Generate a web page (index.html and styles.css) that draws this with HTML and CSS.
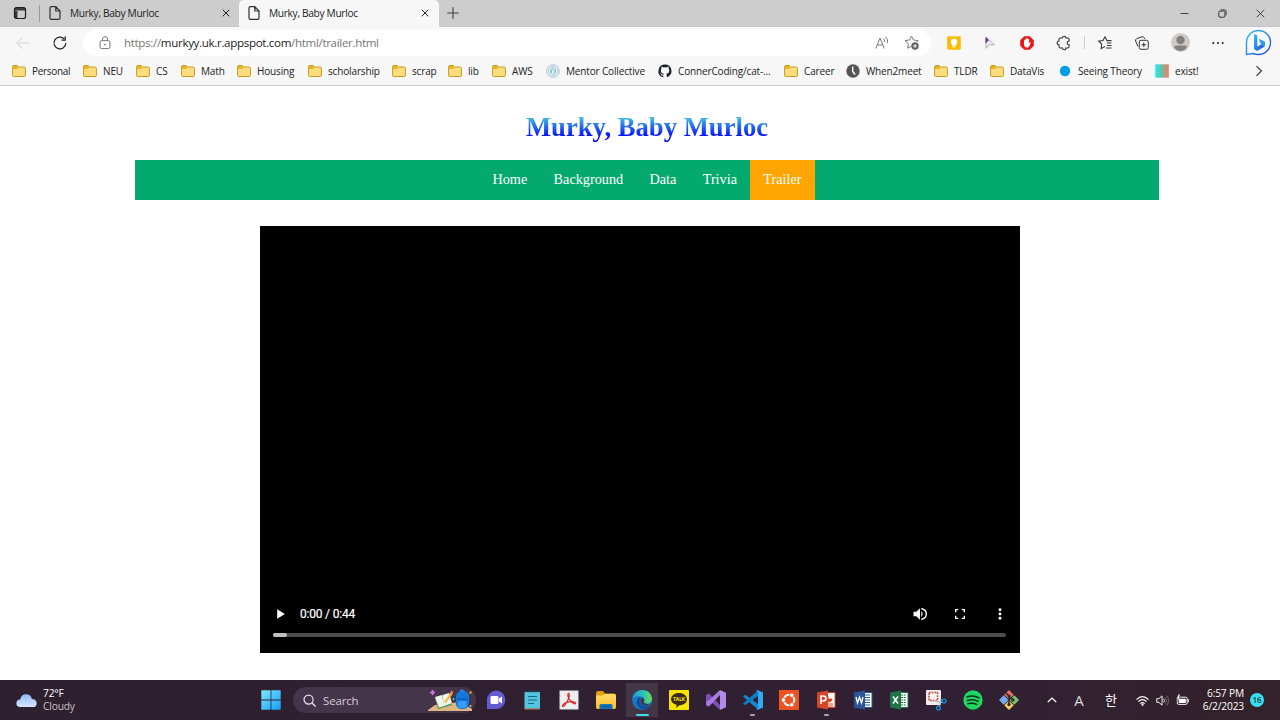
FILE: index.html
```html
<!DOCTYPE html>
<html lang="en">
<head>
<meta charset="utf-8">
<title>Murky, Baby Murloc</title>
<link rel="stylesheet" href="styles.css">
</head>
<body>
<svg class="defs" width="0" height="0">
  <defs>
    <linearGradient id="cyan" x1="0" y1="0" x2="1" y2="1"><stop offset="0" stop-color="#7be8ff"/><stop offset="1" stop-color="#169cf5"/></linearGradient>
    <linearGradient id="bing" x1="0" y1="0" x2="1" y2="1"><stop offset="0" stop-color="#36bdf5"/><stop offset="1" stop-color="#2548d8"/></linearGradient>
    <linearGradient id="cloud" x1="0" y1="0" x2="0" y2="1"><stop offset="0" stop-color="#8db8fa"/><stop offset="1" stop-color="#d8e6ff"/></linearGradient>
    <linearGradient id="edgeA" x1="0" y1="0" x2="1" y2="0"><stop offset="0" stop-color="#1b9de2"/><stop offset=".6" stop-color="#2fc6b0"/><stop offset="1" stop-color="#6add55"/></linearGradient>
    <linearGradient id="yellow" x1="0" y1="0" x2="0" y2="1"><stop offset="0" stop-color="#ffdc6c"/><stop offset="1" stop-color="#f8bd25"/></linearGradient>
    <linearGradient id="rainbow"><stop offset="0" stop-color="#15f4ee"/><stop offset=".5" stop-color="#72b9a5"/><stop offset="1" stop-color="#fb7a54"/></linearGradient>
    <symbol id="folder" viewBox="0 0 14 14"><path d="M.6 3.200v7.900q0 1.400 1.400 1.400h10q1.400 0 1.400-1.400V4.400Q13.400 3 12 3H6.600L5 1.500H2Q.6 1.500.6 3z" fill="#ffdd7e" stroke="#c69a25"/><path d="M1.100 2.200h3.700l1.400 1.300-1.400 1.100H1.100z" fill="#f3b80d" stroke="#c69a25" stroke-width=".5"/></symbol>
    <symbol id="page" viewBox="0 0 12 14"><path d="M1 2Q1 .7 2.300.7h4.500L11 5v7q0 1.300-1.300 1.300H2.300Q1 13.300 1 12zM6.800.7V5H11" fill="none" stroke="#303030" stroke-width="1.200"/></symbol>
    <symbol id="x" viewBox="0 0 8 8"><path d="M.7.7l6.600 6.600M7.300.7L.7 7.300" fill="none" stroke="#222"/></symbol>
  </defs>
</svg>

<header class="browser">
  <div class="tabs">
    <svg class="tab-actions" viewBox="0 0 14 14"><rect x="1.500" y="1.500" width="11" height="11" rx="2" fill="none" stroke="#1e1e1e" stroke-width="1.200"/><path d="M1.500 4.500V3q0-1.500 1.500-1.500h8q1.500 0 1.500 1.500v1.500zM1.500 5H4.500v7.500H3q-1.500 0-1.500-1.500z" fill="#1e1e1e" fill-opacity=".85"/></svg>
    <div class="tab"><svg class="page-icon"><use href="#page"/></svg><span class="tab-title">Murky, Baby Murloc</span><svg class="close"><use href="#x"/></svg></div>
    <div class="tab active"><svg class="page-icon"><use href="#page"/></svg><span class="tab-title">Murky, Baby Murloc</span><svg class="close"><use href="#x"/></svg></div>
    <svg class="new-tab" viewBox="0 0 12 12"><path d="M6 .3v11.400M.3 6h11.400" stroke="#3c3c3c" stroke-width="1.100"/></svg>
    <div class="window-buttons">
      <svg viewBox="0 0 10 10"><path d="M.5 5h9" stroke="#222" stroke-width=".9"/></svg>
      <svg viewBox="0 0 10 10"><path d="M3 .9h4Q9.100.9 9.100 3v4" fill="none" stroke="#333"/><rect x=".9" y="2.300" width="6.800" height="6.800" rx="1.300" fill="none" stroke="#222"/></svg>
      <svg viewBox="0 0 10 10"><path d="M.8.8l8.400 8.400M9.200.8L.8 9.200" stroke="#222" stroke-width=".9"/></svg>
    </div>
  </div>

  <div class="toolbar">
    <svg class="back" viewBox="0 0 14 14"><path d="M13.500 7H1M6.500 1.200L.8 7l5.700 5.800" fill="none" stroke="#cfcfcf"/></svg>
    <svg class="reload" viewBox="0 0 14 14"><path d="M12.800 7A5.900 5.900 0 1 1 11.200 2.900M12.200.3v3.800H8.500" fill="none" stroke="#252525" stroke-width="1.200"/></svg>
    <div class="address">
      <svg class="lock" viewBox="0 0 12 14"><rect x="1.100" y="4.600" width="9.800" height="8" rx="1.600" fill="none" stroke="#777"/><path d="M3.500 4.500V3.200a2.500 2.500 0 0 1 5 0v1.300" fill="none" stroke="#777"/><circle cx="6" cy="8.600" r=".9" fill="#777"/></svg>
      <span class="url">https://<b>murkyy.uk.r.appspot.com</b>/html/trailer.html</span>
      <svg class="read" viewBox="0 0 14 14"><path d="M.8 12.500L5 2l4.200 10.500M2.300 9h5.400M8.200 2.600q1.800 1.200 1.300 3.300M10 .9q3.600 2 2.200 6.200" fill="none" stroke="#727272" stroke-width=".95"/></svg>
      <svg class="star" viewBox="0 0 15 15"><path d="M7.500 11.200L3.600 13.200l.7-4.500L1 5.600l4.500-.6 2-4 2 4 4.500.6-1.500 1.500" fill="none" stroke="#777"/><circle cx="11" cy="11" r="3.700" fill="#636363"/><path d="M11 9v4M9 11h4" stroke="#fff" stroke-width=".9"/></svg>
    </div>
    <div class="extensions">
      <svg viewBox="0 0 14 14"><rect x=".2" y=".2" width="13.600" height="13.600" rx="1" fill="#fbbc04"/><circle cx="7" cy="6" r="3.200" fill="#fff"/><path d="M5.300 8h3.400v2H5.300zM5.500 10.600h3v1h-3z" fill="#fff"/></svg>
      <svg viewBox="0 0 14 14"><path d="M3 1.500v10.800l3-3.500h5.500z" fill="#f0f0f0" stroke="#b4b4b4"/><path d="M2.500.8v7L6 4z" fill="#743b99"/></svg>
      <svg viewBox="0 0 14 14"><path d="M4.200.2h5.600l4 4v5.600l-4 4H4.200l-4-4V4.200z" fill="#ed1515"/><path d="M4 7.500V4.300q.7-.8 1.200 0V3q.7-.8 1.300 0v-.5q.7-.8 1.300 0V3q.8-.7 1.300 0v4.400q1.200-1.800 1.600-.7L9.500 10q-.8 1.700-3 1.500Q4 11.300 4 7.500z" fill="#fff"/></svg>
      <svg viewBox="0 0 14 14"><path d="M3.500 2h2a1.750 1.750 0 0 1 3.500 0h1.600q1.500 0 1.500 1.500V5a1.900 1.900 0 0 0 0 3.800v1.700q0 1.500-1.500 1.500H9a1.750 1.750 0 0 1-3.500 0h-2Q2 12 2 10.500V8.800a1.900 1.900 0 0 1 0-3.800V3.500Q2 2 3.500 2z" fill="none" stroke="#333" stroke-width="1.100"/></svg>
      <i class="separator"></i>
      <svg viewBox="0 0 14 14"><path d="M7 10.500L3.100 12.600l.7-4.300L.7 5.200l4.300-.6L7 .8l2 3.800h4.500M9 7h4.500M9 9.400h4.500M8 12h5.500" fill="none" stroke="#333" stroke-width="1.050"/></svg>
      <svg viewBox="0 0 14 14"><rect x="4.300" y="4.300" width="9" height="9" rx="1.700" fill="none" stroke="#333"/><path d="M3 10.500L.6 5Q.2 3.500 1.500 2.800L7 .7q1.500-.4 2 1L9.700 3M8.800 6.500v4.600M6.500 8.800h4.600" fill="none" stroke="#333"/></svg>
      <svg class="profile" viewBox="0 0 18 18"><circle cx="9" cy="9" r="9" fill="#cfcac6"/><circle cx="9" cy="6.700" r="4" fill="#85807d"/><path d="M3 13.300Q3 11.800 5 11.800h8q2 0 2 1.500Q13 17 9 17T3 13.300" fill="#85807d"/></svg>
      <svg viewBox="0 0 14 14"><circle cx="2.300" cy="7" r="1.050" fill="#292929"/><circle cx="7" cy="7" r="1.050" fill="#292929"/><circle cx="11.700" cy="7" r="1.050" fill="#292929"/></svg>
      <svg class="bing" viewBox="0 0 27 27"><path d="M1.500 25.500V13.500a12 12 0 1 1 12 12q-3 0-5-1z" fill="#f8fcff" stroke="url(#bing)" stroke-width="1.400"/><path d="M9 5l3.300 1.400v11.200l7.400-4.200v4L12 22l-3-2z" fill="url(#bing)"/><path d="M13.700 9.800l6 2.700q1 3-1.300 5l-2.600-2.700z" fill="#279ceb"/></svg>
    </div>
  </div>

  <nav class="bookmarks">
    <span><svg><use href="#folder"/></svg>Personal</span>
    <span><svg><use href="#folder"/></svg>NEU</span>
    <span><svg><use href="#folder"/></svg>CS</span>
    <span><svg><use href="#folder"/></svg>Math</span>
    <span><svg><use href="#folder"/></svg>Housing</span>
    <span><svg><use href="#folder"/></svg>scholarship</span>
    <span><svg><use href="#folder"/></svg>scrap</span>
    <span><svg><use href="#folder"/></svg>lib</span>
    <span><svg><use href="#folder"/></svg>AWS</span>
    <span><svg viewBox="0 0 14 14"><circle cx="7" cy="7" r="6.300" fill="#f4faff" stroke="#9eb7cd" stroke-width=".8"/><circle cx="7" cy="7" r="4.700" fill="none" stroke="#9eb7cd" stroke-width=".7"/><path d="M4.500 9.500V5L7 3.500 9.500 5v4L7 10.500 5.500 9V6L7 5l1.300 1v3" fill="none" stroke="#72cbbb" stroke-width=".9"/></svg>Mentor Collective</span>
    <span><svg viewBox="0 0 16 16"><path d="M8 .5a7.500 7.500 0 0 0-2.400 14.600c.4.100.5-.2.500-.4v-1.400c-2.100.5-2.500-1-2.500-1-.4-.9-.9-1.100-.9-1.100-.7-.5.100-.5.100-.5.800.1 1.200.8 1.200.8.700 1.200 1.800.9 2.200.7.100-.5.300-.9.500-1.100-1.700-.2-3.500-.9-3.500-3.800 0-.8.300-1.500.8-2-.1-.2-.4-1 .1-2 0 0 .6-.2 2.100.7a7.200 7.200 0 0 1 3.700 0c1.500-.9 2.100-.7 2.100-.7.500 1 .2 1.800.1 2 .5.500.8 1.200.8 2 0 2.900-1.800 3.600-3.500 3.800.3.200.6.700.6 1.400v2.100c0 .2.100.5.600.4A7.500 7.500 0 0 0 8 .5z" fill="#1c2128"/></svg>ConnerCoding/cat-...</span>
    <span><svg><use href="#folder"/></svg>Career</span>
    <span><svg viewBox="0 0 14 14"><circle cx="7" cy="7" r="6.700" fill="#555"/><path d="M6.700 2.500v5l2.500 3" fill="none" stroke="#fff" stroke-width="1.400"/></svg>When2meet</span>
    <span><svg><use href="#folder"/></svg>TLDR</span>
    <span><svg><use href="#folder"/></svg>DataVis</span>
    <span><svg viewBox="0 0 14 14"><circle cx="7" cy="7" r="5.200" fill="#009fe3"/></svg>Seeing Theory</span>
    <span><svg viewBox="0 0 14 14"><path d="M.3.3h13.500v13.400H.3z" fill="url(#rainbow)"/></svg>exist!</span>
    <svg class="more" viewBox="0 0 8 12"><path d="M1.500 1.200L6.400 6l-4.900 4.800" fill="none" stroke="#333" stroke-width="1.100"/></svg>
  </nav>
</header>

<main class="page">
  <h1>Murky, Baby Murloc</h1>
  <nav class="menu"><a>Home</a><a>Background</a><a>Data</a><a>Trivia</a><a class="current">Trailer</a></nav>
  <section class="player">
    <div class="controls">
      <svg class="play" viewBox="0 0 8 10"><path d="M.2.2v9.600L7.900 5z" fill="#fff"/></svg>
      <span class="time">0:00 / 0:44</span>
      <svg viewBox="0 0 14 14"><path d="M.5 4.700h2.800L7 1.200v11.600L3.300 9.300H.5z" fill="#fff"/><path d="M8.300 4q2.800 3 0 6" fill="#fff"/><path d="M8.300 1.500q5 1.200 5 5.500t-5 5.500" fill="none" stroke="#fff" stroke-width="1.400"/></svg>
      <svg viewBox="0 0 14 14"><path d="M2.700 5.200V2.700h2.500M8.800 2.700h2.500v2.500M11.300 8.800v2.500H8.800M5.200 11.300H2.700V8.800" fill="none" stroke="#fff" stroke-width="1.300"/></svg>
      <svg viewBox="0 0 14 14"><circle cx="7" cy="2.700" r="1.450" fill="#fff"/><circle cx="7" cy="7" r="1.450" fill="#fff"/><circle cx="7" cy="11.300" r="1.450" fill="#fff"/></svg>
    </div>
    <div class="timeline"><i></i></div>
  </section>
</main>

<footer class="taskbar">
  <div class="weather">
    <svg viewBox="0 0 20 14"><path d="M4 13.300A3.600 3.600 0 0 1 4 6Q5 1 9.600 1t5.600 4.500q4.500.2 4.500 4t-4 3.800z" fill="url(#cloud)"/><path d="M3.500 9Q6 5 9 7.500q2-3 6 0" fill="none" stroke="#b2d0ff"/></svg>
    <div><p>72°F</p><p class="dim">Cloudy</p></div>
  </div>
  <svg class="start" viewBox="0 0 20 20"><path d="M.3.3h9.300v9.300H.3zM10.400.3h9.300v9.300h-9.300zM.3 10.400h9.300v9.300H.3zM10.400 10.400h9.300v9.300h-9.300z" fill="url(#cyan)"/></svg>
  <div class="search">
    <svg class="lens" viewBox="0 0 14 14"><circle cx="6" cy="6" r="4.900" fill="none" stroke="#e8e2e9" stroke-width="1.300"/><path d="M9.500 9.500l4 4" stroke="#e8e2e9" stroke-width="1.500"/></svg>
    <span>Search</span>
    <svg class="school" viewBox="0 0 46 24"><path d="M0 22l7-5 25-3 12 7v2H0z" fill="#dfb681"/><path d="M7 10l7-2 7-2 3 11-14 4z" fill="#4c9e5c"/><path d="M7 9l7-2 2 11-5 1.500zM14.500 7l6.500-2 3 10-8 3z" fill="#f2f5ec"/><path d="M16 14l7-10 2 1.400L18 15z" fill="#f3bd3c"/><path d="M21.500 5l2-2.500 2 1.500-2 2.500z" fill="#ed7455"/><rect x="28" y="3" width="13" height="18" rx="5.500" fill="#1278dc"/><path d="M32.500 4q0-4 4 0" fill="none" stroke="#2f86eb" stroke-width="1.500"/><rect x="30" y="13" width="9" height="7" rx="2" fill="#379cf7"/><path d="M29 11h11" stroke="#0755b1"/><path d="M4.500 2v5M2 4.500h5" stroke="#d779ef" stroke-width="1.700"/><circle cx="42.500" cy="4.500" r="1.200" fill="#fba921"/><circle cx="25.500" cy="11" r="1" fill="#47dfec"/><circle cx="42.500" cy="18" r="1" fill="#ffc640"/></svg>
  </div>
  <div class="apps">
    <span><svg viewBox="0 0 20 20"><path d="M1 19V10a9.200 9.200 0 1 1 9 9z" fill="#625bd1"/><rect x="4.500" y="6" width="8" height="8" rx="1.500" fill="#fff"/><path d="M13 8.500l3-2v7l-3-2z" fill="#fff"/></svg></span>
    <span><svg viewBox="0 0 20 20"><rect x="2.500" y="2" width="15.500" height="17" fill="#54c3df"/><path d="M2.500 18.300h15.500v1.200H2.500z" fill="#b97849"/><path d="M4 2.500V.5M7 2.500V.5M10 2.500V.5M13 2.500V.5M16 2.500V.5" stroke="#185f83"/><path d="M6 6.500h9M6 10h9M6 13.500h6" stroke="#176681"/></svg></span>
    <span><svg viewBox="0 0 20 20"><rect x=".8" y=".8" width="18.400" height="18.400" fill="#eee" stroke="#bbb" stroke-width=".6"/><path d="M3.500 15.800C5 12 12 11 15.500 12q2.500 1.500 0 1.800C12 13 8.500 7 8.800 4.500 9.200 2.500 10.700 3.500 10.300 6 9.500 10 6 16 4.300 16.500q-1.300 0-.8-.7z" fill="none" stroke="#d92327" stroke-width="1.200"/></svg></span>
    <span><svg viewBox="0 0 20 20"><path d="M0 3q0-2 2-2h5l2 2.500h9q2 0 2 2V17q0 2-2 2H2q-2 0-2-2z" fill="#dea10a"/><path d="M0 5.500h7L9 4h9q2 0 2 2v11q0 2-2 2H2q-2 0-2-2z" fill="url(#yellow)"/><path d="M3.500 19v-3.500q0-1.500 1.500-1.500h10q1.500 0 1.500 1.500V19z" fill="#1273b9"/><path d="M6 16.500h8" stroke="#084f8b"/></svg></span>
    <span class="focused"><svg viewBox="0 0 20 20"><circle cx="10" cy="10" r="9.900" fill="#1977ca"/><path d="M.3 8.500C1.500 3 5.500 0 10.500 0 16 0 20 4 20 9c0 3-2.500 4.800-5.500 4.800-2.300 0-3.400-1-2.500-2.200C13.500 9 11 6.500 7.500 6.200 4.500 5.900 1.500 7 .3 8.500z" fill="url(#edgeA)"/><path d="M8.500 7C5.500 7.800 4 11 5 14.200c1.200 3.700 5 5.500 8.300 5.200 2.300-.5 4.200-2.300 5.300-4-5 2.300-10.500.2-10.800-4-.1-1.700.2-3.200.7-4.400z" fill="#144e98"/><path d="M12 11.600C13 9.500 11.500 8 10 7.500q-2 2-1.500 4.500 1.500 4 6.500 3.800l4-1.500q-2 .5-4.500-.5-3.400-.5-2.500-2.200z" fill="#443647"/></svg><i></i></span>
    <span><svg viewBox="0 0 20 20"><rect width="20" height="20" rx=".7" fill="#fae500"/><path d="M10 3c4.500 0 8 2.700 8 6.300s-3.500 6-7.600 6L7.100 18l.5-3.200C4.300 14 2 12 2 9.300 2 5.700 5.500 3 10 3z" fill="#3c2b1b"/><text x="10" y="11.300" text-anchor="middle">TALK</text></svg></span>
    <span><svg viewBox="0 0 20 20"><path d="M0 5l3-1.500L14 15l0 5L3 10v6.500L0 15z" fill="#7950b2"/><path d="M14 0l6 2.800v14.400L14 20z" fill="#b18be8"/><path d="M0 15l3 1.500L14 5V0L3 10 0 12z" fill="#a77ce1"/></svg></span>
    <span class="open"><svg viewBox="0 0 20 20"><path d="M0 6.500L2.300 4.700 15 14v5.500z" fill="#148ad2"/><path d="M0 13.500l2.300 1.800L15 6V.5z" fill="#107bc0"/><path d="M14.500 0L20 2.400v15.200L14.500 20l-1.200-.5L15 18V2L13.300.5z" fill="#31acf0"/></svg><i></i></span>
    <span><svg viewBox="0 0 20 20"><rect width="20" height="20" fill="#e95420"/><circle cx="10" cy="10" r="5.300" fill="none" stroke="#fff" stroke-width="2"/><g fill="#fff" stroke="#e95420" stroke-width=".9"><circle cx="4.500" cy="10" r="2.300"/><circle cx="12.800" cy="5.200" r="2.300"/><circle cx="12.800" cy="14.800" r="2.300"/></g></svg></span>
    <span class="open"><svg viewBox="0 0 20 20"><path d="M9 2.500h10v15H9z" fill="#fff" stroke="#d34727"/><path d="M12 6a3 3 0 1 0 4 3h-4zM12 14h5M12 16h5" fill="#d34727" stroke="#d34727"/><path d="M1 2.500L12 .5v19l-11-2z" fill="#d34727"/><path d="M5 14V6h2q3 0 3 2.500T7 11H5" fill="none" stroke="#fff" stroke-width="1.600"/></svg><i></i></span>
    <span><svg viewBox="0 0 20 20"><path d="M9 2.500h10v15H9z" fill="#fff" stroke="#2a5699"/><path d="M12 5h5M12 7.500h5M12 10h5M12 12.500h5M12 15h5" stroke="#2a5699"/><path d="M1 2.500L12 .5v19l-11-2z" fill="#2a5699"/><path d="M3 7l1.500 6 2-6 2 6L10 7" fill="none" stroke="#fff" stroke-width="1.300"/></svg></span>
    <span><svg viewBox="0 0 20 20"><path d="M9 2.500h10v15H9z" fill="#fff" stroke="#207345"/><path d="M12 5h5M12 7.500h5M12 10h5M12 12.500h5M12 15h5" stroke="#207345" stroke-dasharray="2 .7"/><path d="M1 2.500L12 .5v19l-11-2z" fill="#207345"/><path d="M4 6.500l5 7M9 6.500l-5 7" stroke="#fff" stroke-width="1.500"/></svg></span>
    <span><svg viewBox="0 0 20 20"><rect width="15" height="15" rx="1" fill="#eee"/><rect x="3" y="2.500" width="8.500" height="8" fill="#f4f4f4" stroke="#c93e2a" stroke-width="1.500" stroke-dasharray="1.700 1.100"/><path d="M9 11l8 1.500M13 17l2-8" stroke="#bbc6cc" stroke-width="1.500"/><circle cx="18" cy="11" r="1.900" fill="none" stroke="#148dcf" stroke-width="1.400"/><circle cx="12.500" cy="18" r="1.900" fill="none" stroke="#148dcf" stroke-width="1.400"/></svg></span>
    <span><svg viewBox="0 0 20 20"><circle cx="10" cy="10" r="9.700" fill="#1ed760"/><path d="M4 7q6-2.300 12 .8M4.500 10.500q5.500-1.800 10.500.8M5 13.700q4.500-1.300 8.700.7" fill="none" stroke="#172e21" stroke-width="1.600" stroke-linecap="round"/></svg></span>
    <span><svg viewBox="0 0 20 20"><path d="M10 0l4.700 4.700L10 9.400 5.300 4.700z" fill="#ef7066"/><path d="M15.300 5.300L20 10l-4.700 4.700-4.700-4.700z" fill="#7fc56c"/><path d="M10 10.600l4.700 4.700L10 20l-4.700-4.700z" fill="#f7d262"/><path d="M4.700 5.300L9.400 10l-4.700 4.700L0 10z" fill="#72adf4"/><path d="M7 3l3 3v9M10 7l4 3" stroke="#30302d" stroke-width="1.600" fill="none"/><circle cx="10" cy="6" r="1.600" fill="#30302d"/><circle cx="10" cy="14.500" r="1.700" fill="#30302d"/><circle cx="14" cy="10" r="1.700" fill="#30302d"/></svg></span>
  </div>
  <div class="tray">
    <svg class="chevron" viewBox="0 0 10 10"><path d="M.8 7L5 3l4.200 4" fill="none" stroke="#fff" stroke-width="1.200"/></svg>
    <span class="latin">A</span>
    <span class="hangul">한</span>
    <svg viewBox="0 0 14 14"><path d="M.5 6q6.500-6.500 13 0M2.500 8.300q4.500-4.500 9 0M4.700 10.400q2.300-2.300 4.600 0" fill="none" stroke="#fff" stroke-width="1.200"/><circle cx="7" cy="11.700" r="1.200" fill="#fff"/></svg>
    <svg viewBox="0 0 14 14"><path d="M.8 5h2.300l3.400-3v10L3.100 9H.8z" fill="none" stroke="#fff"/><path d="M8.300 5q1.500 2 0 4" fill="none" stroke="#fff"/><path d="M10 3.500q2.500 3.500 0 7M11.700 1.700q3.500 5.300 0 10.600" fill="none" stroke="#796d7a" stroke-width=".9"/></svg>
    <svg viewBox="0 0 14 14"><rect x="1.400" y="3.400" width="10.600" height="7.800" rx="1.500" fill="none" stroke="#fff"/><path d="M4 5h6.600v4.700H3V6z" fill="#fff"/><path d="M12.500 5.500h1.200v3.500h-1.200z" fill="#fff"/><path d="M2.800 0L.5 5h2l-.7 3L5 3.700H3.200L4.500.5z" fill="#fff" stroke="#302030" stroke-width=".4"/></svg>
    <div class="clock"><p>6:57 PM</p><p>6/2/2023</p></div>
    <b class="badge">16</b>
  </div>
</footer>
</body>
</html>
```
FILE: styles.css
```css
* { box-sizing: border-box; }
body { margin: 0; width: 1280px; height: 720px; overflow: hidden; display: flex; flex-direction: column; background: #fff; font-family: "Open Sans", "Noto Sans", sans-serif; color: #222; }
svg { display: block; flex: none; overflow: visible; }
.defs { position: absolute; }
p { margin: 0; }

.browser { height: 86px; flex: none; background: #f7f7f7; border-bottom: 1px solid #cecece; }
.tabs { height: 27px; background: #cdcdcd; display: flex; align-items: center; padding-left: 13px; border-bottom: 1px solid #c4c4c4; }
.tab-actions { width: 14px; height: 14px; }
.tab { width: 200px; height: 17px; margin-left: 12px; padding: 0 9px 0 9px; display: flex; align-items: center; border-left: 1px solid #999; font-size: 10.2px; }
.tab-title { flex: 1; padding-left: 9px; letter-spacing: -.33px; white-space: nowrap; }
.tab:not(.active) .tab-title { letter-spacing: -.33px; }
.tab.active { height: 27px; margin-left: 0; border: 0; background: #f7f7f7; border-radius: 5px 5px 0 0; padding: 0 10px 0 9px; }
.page-icon { width: 12px; height: 14px; }
.close { width: 8px; height: 8px; }
.new-tab { width: 12px; height: 12px; margin-left: 8px; }
.window-buttons { display: flex; gap: 29px; margin: 0 15px 0 auto; }
.window-buttons svg { width: 9px; height: 9px; }

.toolbar { height: 30px; display: flex; align-items: center; padding: 1px 0 0 16px; }
.back { width: 14px; height: 14px; }
.reload { width: 14px; height: 14px; margin-left: 23px; }
.address { flex: none; width: 848px; height: 26px; margin-left: 16px; border-radius: 13px; background: #fff; display: flex; align-items: center; padding: 0 12px 0 16px; }
.lock { width: 12px; height: 14px; margin-right: 13px; }
.url { flex: 1; color: #777; font-size: 11.6px; letter-spacing: -.34px; }
.url b { color: #222; font-weight: 400; }
.read { width: 14px; height: 14px; margin-right: 15px; }
.star { width: 15px; height: 15px; }
.extensions { display: grid; grid-template-columns: 36px 36px 38px 36px 4px 38px 36px 40px 36px 44px; justify-items: center; align-items: center; margin-left: 5px; }
.extensions svg { width: 14px; height: 14px; }
.extensions .profile { width: 19px; height: 19px; }
.extensions .bing { width: 27px; height: 27px; }
.separator { height: 13px; border-left: 1px solid #ccc; }

.bookmarks { height: 27px; display: flex; align-items: center; padding-left: 12px; font-size: 10px; letter-spacing: -.15px; }
.bookmarks span { flex: none; display: flex; align-items: center; white-space: nowrap; }
.bookmarks span svg { width: 14px; height: 14px; margin-right: 6px; }
.bookmarks span:nth-child(1) { width: 71px; letter-spacing: -.3px; }
.bookmarks span:nth-child(2) { width: 53px; }
.bookmarks span:nth-child(3) { width: 45px; }
.bookmarks span:nth-child(4) { width: 56px; }
.bookmarks span:nth-child(5) { width: 71px; }
.bookmarks span:nth-child(6) { width: 84px; }
.bookmarks span:nth-child(7) { width: 56px; }
.bookmarks span:nth-child(8) { width: 44px; }
.bookmarks span:nth-child(9) { width: 54px; }
.bookmarks span:nth-child(10) { width: 112px; }
.bookmarks span:nth-child(11) { width: 126px; }
.bookmarks span:nth-child(12) { width: 62px; }
.bookmarks span:nth-child(13) { width: 88px; }
.bookmarks span:nth-child(14) { width: 56px; }
.bookmarks span:nth-child(15) { width: 68px; }
.bookmarks span:nth-child(16) { width: 97px; }
.more { width: 8px; height: 12px; margin: 0 17px 0 auto; }

.page { height: 594px; flex: none; display: flex; flex-direction: column; font-family: "Liberation Serif", serif; }
.page h1 { align-self: center; height: 31px; margin: 26px 0 17px 14px; font-size: 26.67px; line-height: 31px; background: linear-gradient(#4ed2dc 10%, #0000ff 84%); background-clip: text; -webkit-background-clip: text; color: transparent; }
.menu { width: 1024px; height: 40px; margin-left: 135px; display: flex; justify-content: center; background: #04aa6d; color: #fff; font-size: 14.22px; line-height: 39px; }
.menu a { padding: 0 13.2px; }
.menu .current { background: orange; }
.player { width: 760px; height: 427px; margin: 26px 0 0 260px; padding: 0 13px 16px; display: flex; flex-direction: column; justify-content: flex-end; background: #000; color: #fff; }
.controls { display: flex; align-items: center; gap: 26px; height: 20px; padding-left: 4px; margin-bottom: 9px; }
.controls svg { width: 14px; height: 14px; }
.controls .play { width: 8px; height: 10px; }
.time { flex: 1; margin-left: -11px; font: 12px/18px Roboto, sans-serif; letter-spacing: -.2px; -webkit-text-stroke: .2px #fff; padding-bottom: 1px; }
.timeline { width: 733px; height: 4px; border-radius: 2px; background: #4d4d4d; }
.timeline i { display: block; width: 14px; height: 4px; border-radius: 2px; background: #c1c1c1; }

.taskbar { height: 40px; flex: none; display: flex; align-items: center; background: linear-gradient(90deg, #2e202f 0%, #312033 75%, #332229 100%); color: #fff; }
.weather { flex: none; width: 261px; padding-left: 16px; display: flex; align-items: center; gap: 6px; font-size: 10.2px; line-height: 13px; letter-spacing: -.15px; }
.weather svg { width: 21px; height: 15px; }
.dim { color: #c7c0c8; }
.start { width: 20px; height: 20px; }
.search { flex: none; width: 183px; height: 26px; margin: 0 1px 0 12px; padding: 0 2px 0 10px; border-radius: 13px; background: #45354a; display: flex; align-items: center; font-size: 11.5px; color: #d7ced9; }
.search span { flex: 1; padding-left: 7px; letter-spacing: -.15px; }
.lens { width: 13px; height: 13px; }
.school { width: 46px; height: 24px; }
.apps { flex: none; display: flex; height: 40px; margin-left: .4px; }
.apps span { position: relative; width: 36.7px; display: grid; place-items: center; }
.apps svg { width: 20px; height: 20px; }
.apps text { font: bold 5px Roboto, sans-serif; fill: #fae500; }
.apps i { position: absolute; bottom: 4px; left: 16px; width: 5px; height: 2px; border-radius: 1px; background: #aaa; }
.apps .focused { background: linear-gradient(#443647, #443647) 2px 3px / 32px 34px no-repeat; }
.apps .focused i { left: 12px; width: 13px; background: #3bddeb; }
.tray { flex: 1; display: grid; grid-template-columns: 22px 32px 37px 20px 20px 20px 58px 14px; align-items: center; justify-content: end; justify-items: center; padding-right: 16px; }
.tray svg { width: 13px; height: 13px; }
.tray .chevron { width: 10px; height: 10px; }
.latin { font-size: 15px; font-weight: 400; color: #ddd8de; }
.hangul { margin: 0 5px 2px 0; font: 13px "Noto Sans CJK KR", sans-serif; }
.clock { justify-self: end; margin-right: 6px; text-align: right; white-space: nowrap; font-size: 10.2px; line-height: 13px; letter-spacing: -.15px; }
.badge { width: 14px; height: 14px; border-radius: 50%; background: #38dff3; color: #173941; text-align: center; font-size: 8px; line-height: 14px; font-weight: 600; }
```
